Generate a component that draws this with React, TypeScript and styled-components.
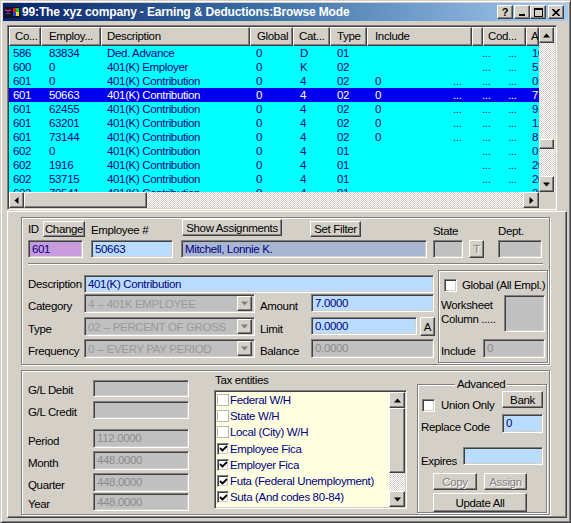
import React from "react";
import styled, { createGlobalStyle, css } from "styled-components";

const FACE = "#d4d0c8";
const SHADOW = "#808080";
const DARK = "#404040";
const NAVY = "#000080";
const BLUE_FIELD = "#badcff";
const GREY_FIELD = "#c0c0c0";
const MUTED = "#8c8c8c";

const GlobalStyle = createGlobalStyle`
  html, body { margin: 0; padding: 0; background: ${FACE}; }
  body {
    font-family: "Liberation Sans", Arial, sans-serif;
    font-size: 11.5px;
    letter-spacing: -0.35px;
    color: #000;
  }
  * { box-sizing: border-box; }
`;

const raised = css`
  border: 1px solid;
  border-color: #fff ${DARK} ${DARK} #fff;
  box-shadow: inset -1px -1px ${SHADOW};
  background: ${FACE};
`;

const sunken = css`
  border: 1px solid;
  border-color: ${SHADOW} #fff #fff ${SHADOW};
  box-shadow: inset 1px 1px ${DARK}, inset -1px -1px ${FACE};
`;

const etched = css`
  border: 1px solid ${SHADOW};
  box-shadow: inset 1px 1px #fff, 1px 1px #fff;
`;

const dither = css`
  background-color: ${FACE};
  background-image: conic-gradient(#fff 25%, transparent 0 50%, #fff 0 75%, transparent 0);
  background-size: 2px 2px;
`;

type Place = { $ml?: number; $mt?: number };
const place = css<Place>`
  margin-left: ${(p) => p.$ml ?? 0}px;
  margin-top: ${(p) => p.$mt ?? 0}px;
`;

/* ---------- window chrome ---------- */

const Window = styled.div`
  width: 571px;
  height: 523px;
  background: ${FACE};
  border: 1px solid;
  border-color: ${FACE} ${DARK} ${DARK} ${FACE};
  box-shadow: inset 1px 1px #fff, inset -1px -1px ${SHADOW};
  padding: 2px;
  display: flex;
  flex-direction: column;
  overflow: hidden;
`;

const TitleBar = styled.div`
  flex: none;
  height: 18px;
  display: flex;
  align-items: center;
  padding: 0 4px 0 1px;
  background: linear-gradient(90deg, #0a246a 0%, #3a6ea5 45%, #a6caf0 100%);
  color: #fff;
`;

const TitleText = styled.span`
  flex: 1;
  margin-left: 2px;
  font-weight: bold;
  font-size: 12px;
  letter-spacing: -0.15px;
  white-space: nowrap;
`;

const CaptionBtn = styled.div<Place>`
  ${raised};
  ${place};
  flex: none;
  width: 16px;
  height: 14px;
  display: flex;
  align-items: center;
  justify-content: center;
  color: #000;
  font-weight: bold;
  font-size: 11px;
  letter-spacing: 0;
`;

/* ---------- browse grid ---------- */

const headCols = "32px 60px 149px 43px 37px 37px 105px 11px 43px 13px";
const rowCols = "32px 60px 149px 43px 37px 37px 81px 30px 25px 23px 13px";

const GridFrame = styled.div`
  ${sunken};
  flex: none;
  margin: 4px 0 0 4px;
  width: 550px;
  height: 185px;
  padding: 1px;
  display: grid;
  grid-template-columns: 530px 16px;
  grid-template-rows: 165px 16px;
  background: ${FACE};
`;

const Table = styled.div`
  background: #00ffff;
  overflow: hidden;
  display: flex;
  flex-direction: column;
`;

const HeadRow = styled.div`
  flex: none;
  height: 19px;
  display: grid;
  grid-template-columns: ${headCols};
`;

const HeadCell = styled.div<{ $pad: number }>`
  ${raised};
  padding-left: ${(p) => p.$pad}px;
  line-height: 16px;
  white-space: nowrap;
  overflow: hidden;
`;

const DataRow = styled.div<{ $sel?: boolean }>`
  flex: none;
  height: 14px;
  line-height: 14px;
  display: grid;
  grid-template-columns: ${rowCols};
  background: ${(p) => (p.$sel ? "#0000ee" : "#00ffff")};
  color: ${(p) => (p.$sel ? "#fff" : NAVY)};
`;

const Cell = styled.div<{ $pad: number }>`
  padding-left: ${(p) => p.$pad}px;
  white-space: nowrap;
  overflow: hidden;
`;

const VScroll = styled.div`
  ${dither};
  display: flex;
  flex-direction: column;
`;

const HScroll = styled.div`
  ${dither};
  display: flex;
`;

const ScrollBtn = styled.div<{ $w?: number; $h?: number }>`
  ${raised};
  flex: none;
  width: ${(p) => p.$w ?? 16}px;
  height: ${(p) => p.$h ?? 16}px;
  display: flex;
  align-items: center;
  justify-content: center;
`;

const Thumb = styled.div<{ $w?: number; $h?: number; $mt?: number }>`
  ${raised};
  flex: none;
  width: ${(p) => (p.$w ? `${p.$w}px` : "auto")};
  height: ${(p) => (p.$h ? `${p.$h}px` : "auto")};
  margin-top: ${(p) => p.$mt ?? 0}px;
`;

const Spacer = styled.div`
  flex: 1;
`;

const Corner = styled.div`
  background: ${FACE};
`;

/* ---------- lower form ---------- */

const LowerPanel = styled.div`
  flex: none;
  margin: 1px 0 0 4px;
  width: 560px;
  height: 307px;
  border: 1px solid;
  border-color: #fff ${DARK} ${DARK} #fff;
  box-shadow: inset -1px -1px ${SHADOW};
  display: flex;
  flex-direction: column;
`;

const Group = styled.div<{ $h: number }>`
  ${etched};
  flex: none;
  margin: 5px 0 0 13px;
  width: 529px;
  height: ${(p) => p.$h}px;
  display: flex;
  flex-direction: column;
`;

const Row = styled.div<Place & { $h: number }>`
  ${place};
  flex: none;
  height: ${(p) => p.$h}px;
  display: flex;
  align-items: flex-start;
`;

const Label = styled.span<Place & { $w?: number; $lh?: number; $end?: boolean }>`
  ${place};
  flex: none;
  width: ${(p) => (p.$w ? `${p.$w}px` : "auto")};
  line-height: ${(p) => p.$lh ?? 14}px;
  white-space: nowrap;
  align-self: ${(p) => (p.$end ? "flex-end" : "flex-start")};
`;

const Field = styled.div<Place & { $w: number; $h?: number; $bg?: string; $muted?: boolean }>`
  ${sunken};
  ${place};
  flex: none;
  width: ${(p) => p.$w}px;
  height: ${(p) => p.$h ?? 18}px;
  background: ${(p) => p.$bg ?? GREY_FIELD};
  color: ${(p) => (p.$muted ? MUTED : NAVY)};
  padding: 0 3px;
  line-height: ${(p) => (p.$h ?? 18) - 2}px;
  white-space: nowrap;
  overflow: hidden;
`;

const Button = styled.button<Place & { $w: number; $h: number }>`
  ${raised};
  ${place};
  flex: none;
  width: ${(p) => p.$w}px;
  height: ${(p) => p.$h}px;
  padding: 0;
  font: inherit;
  letter-spacing: inherit;
  color: #000;
  line-height: ${(p) => p.$h - 3}px;
  &:disabled {
    color: ${SHADOW};
    text-shadow: 1px 1px #fff;
  }
`;

const Separator = styled.div`
  flex: none;
  margin: 5px 0 0 6px;
  width: 515px;
  height: 2px;
  border-top: 1px solid ${SHADOW};
  border-bottom: 1px solid #fff;
`;

const FormBody = styled.div`
  flex: 1;
  display: flex;
  align-items: flex-start;
`;

const Column = styled.div<Place & { $w: number }>`
  ${place};
  flex: none;
  width: ${(p) => p.$w}px;
  display: flex;
  flex-direction: column;
`;

const Combo = styled.div<{ $w: number }>`
  ${sunken};
  flex: none;
  width: ${(p) => p.$w}px;
  height: 19px;
  padding: 2px;
  background: ${GREY_FIELD};
  color: #999;
  display: flex;
  align-items: center;
`;

const ComboText = styled.span`
  flex: 1;
  padding-left: 1px;
  white-space: nowrap;
  overflow: hidden;
`;

const ComboBtn = styled.div`
  ${raised};
  flex: none;
  width: 15px;
  height: 15px;
  display: flex;
  align-items: center;
  justify-content: center;
`;

const Box = styled.div<Place & { $w: number; $h: number }>`
  ${etched};
  ${place};
  flex: none;
  position: relative;
  width: ${(p) => p.$w}px;
  height: ${(p) => p.$h}px;
  display: flex;
  flex-direction: column;
`;

const Legend = styled.span`
  position: absolute;
  top: -8px;
  left: 37px;
  padding: 0 2px;
  line-height: 14px;
  background: ${FACE};
`;

const Check = styled.div<Place & { $size?: number; $flat?: boolean }>`
  ${place};
  flex: none;
  width: ${(p) => p.$size ?? 13}px;
  height: ${(p) => p.$size ?? 13}px;
  background: #fff;
  display: flex;
  align-items: center;
  justify-content: center;
  ${(p) =>
    p.$flat
      ? css`
          border: 1px solid #b4b4b4;
        `
      : sunken};
`;

const Lines = styled.div<Place & { $w: number }>`
  ${place};
  flex: none;
  width: ${(p) => p.$w}px;
  padding-top: 3px;
  line-height: 14px;
`;

const ListBox = styled.div`
  ${sunken};
  flex: none;
  margin-top: 3px;
  height: 119px;
  padding: 1px;
  background: #ffffe1;
  display: flex;
`;

const ListItems = styled.div`
  flex: 1;
  display: flex;
  flex-direction: column;
`;

const ListItem = styled.div`
  flex: none;
  height: 16.2px;
  display: flex;
  align-items: center;
  color: ${NAVY};
  white-space: nowrap;
`;

const ItemText = styled.span`
  margin-left: 1px;
  line-height: 14px;
`;

const ListScroll = styled.div`
  ${dither};
  flex: none;
  width: 16px;
  display: flex;
  flex-direction: column;
`;

/* ---------- glyphs ---------- */

function Arrow({ dir, color = "#000" }: { dir: "up" | "down" | "left" | "right"; color?: string }) {
  const rot = { up: 0, right: 90, down: 180, left: 270 }[dir];
  return (
    <svg width="7" height="7" viewBox="0 0 7 7" style={{ transform: `rotate(${rot}deg)` }}>
      <polygon points="3.5,1.5 7,5.5 0,5.5" fill={color} />
    </svg>
  );
}

function Tick() {
  return (
    <svg width="9" height="9" viewBox="0 0 9 9">
      <path d="M1 4 L3.5 6.5 L8 2" fill="none" stroke="#000" strokeWidth="1.8" />
    </svg>
  );
}

function AppIcon() {
  return (
    <svg width="16" height="16" viewBox="0 0 16 16">
      <rect x="0" y="3" width="16" height="11" fill="#101028" />
      <rect x="1" y="5" width="2" height="2" fill="#c02050" />
      <rect x="3" y="6" width="2" height="2" fill="#8040b0" />
      <rect x="5" y="5" width="2" height="2" fill="#c02050" />
      <rect x="2" y="9" width="4" height="1" fill="#6040a0" />
      <rect x="9" y="4" width="3" height="4" fill="#e02020" />
      <rect x="12" y="4" width="3" height="4" fill="#20c030" />
      <rect x="9" y="8" width="3" height="4" fill="#2040e0" />
      <rect x="12" y="8" width="3" height="4" fill="#f0d820" />
    </svg>
  );
}

/* ---------- data ---------- */

type GridRow = {
  co: string;
  emp: string;
  desc: string;
  cat: string;
  type: string;
  inc: string;
  all: boolean;
  a: string;
  sel?: boolean;
};

const gridRows: GridRow[] = [
  { co: "586", emp: "83834", desc: "Ded. Advance", cat: "D", type: "01", inc: "", all: false, a: "10.0000" },
  { co: "600", emp: "0", desc: "401(K) Employer", cat: "K", type: "02", inc: "", all: false, a: "5.0000" },
  { co: "601", emp: "0", desc: "401(K) Contribution", cat: "4", type: "02", inc: "0", all: true, a: "0.0000" },
  { co: "601", emp: "50663", desc: "401(K) Contribution", cat: "4", type: "02", inc: "0", all: true, a: "7.0000", sel: true },
  { co: "601", emp: "62455", desc: "401(K) Contribution", cat: "4", type: "02", inc: "0", all: true, a: "9.0000" },
  { co: "601", emp: "63201", desc: "401(K) Contribution", cat: "4", type: "02", inc: "0", all: true, a: "12.0000" },
  { co: "601", emp: "73144", desc: "401(K) Contribution", cat: "4", type: "02", inc: "0", all: true, a: "8.0000" },
  { co: "602", emp: "0", desc: "401(K) Contribution", cat: "4", type: "01", inc: "", all: false, a: "0.0000" },
  { co: "602", emp: "1916", desc: "401(K) Contribution", cat: "4", type: "01", inc: "", all: false, a: "20.0000" },
  { co: "602", emp: "53715", desc: "401(K) Contribution", cat: "4", type: "01", inc: "", all: false, a: "20.0000" },
  { co: "602", emp: "79541", desc: "401(K) Contribution", cat: "4", type: "01", inc: "", all: false, a: "20.0000" },
];

const headers: [string, number][] = [
  ["Co...", 5],
  ["Employ...", 7],
  ["Description", 5],
  ["Global", 6],
  ["Cat...", 5],
  ["Type", 6],
  ["Include", 7],
  ["", 0],
  ["Cod...", 4],
  ["A", 4],
];

const pads = [4, 8, 6, 6, 7, 7, 8, 5, 4, 5, 6];

const taxes: [string, boolean][] = [
  ["Federal W/H", false],
  ["State W/H", false],
  ["Local (City) W/H", false],
  ["Employee Fica", true],
  ["Employer Fica", true],
  ["Futa (Federal Unemployment)", true],
  ["Suta (And codes 80-84)", true],
];

function Browse() {
  return (
    <GridFrame>
      <Table>
        <HeadRow>
          {headers.map(([t, p], i) => (
            <HeadCell key={i} $pad={p}>
              {t}
            </HeadCell>
          ))}
        </HeadRow>
        {gridRows.map((r, i) => {
          const cells = [r.co, r.emp, r.desc, "0", r.cat, r.type, r.inc, r.all ? "..." : "", "...", "...", r.a];
          return (
            <DataRow key={i} $sel={r.sel}>
              {cells.map((c, j) => (
                <Cell key={j} $pad={pads[j]}>
                  {c}
                </Cell>
              ))}
            </DataRow>
          );
        })}
      </Table>
      <VScroll>
        <ScrollBtn $w={15}>
          <Arrow dir="up" />
        </ScrollBtn>
        <Thumb $w={15} $h={10} $mt={96} />
        <Spacer />
        <ScrollBtn $w={15}>
          <Arrow dir="down" />
        </ScrollBtn>
      </VScroll>
      <HScroll>
        <ScrollBtn $w={15}>
          <Arrow dir="left" />
        </ScrollBtn>
        <Thumb $w={123} />
        <Spacer />
        <ScrollBtn>
          <Arrow dir="right" />
        </ScrollBtn>
      </HScroll>
      <Corner />
    </GridFrame>
  );
}

function ComboBox({ w, text }: { w: number; text: string }) {
  return (
    <Combo $w={w}>
      <ComboText>{text}</ComboText>
      <ComboBtn>
        <Arrow dir="down" color={SHADOW} />
      </ComboBtn>
    </Combo>
  );
}

function DeductionGroup() {
  return (
    <Group $h={148}>
      <Row $mt={1} $h={20}>
        <Label $ml={6} $mt={3} $w={15}>
          ID
        </Label>
        <Button $mt={2} $w={42} $h={16}>
          Change
        </Button>
        <Label $ml={6} $mt={4} $w={91}>
          Employee #
        </Label>
        <Button $w={100} $h={17}>
          Show Assignments
        </Button>
        <Button $ml={28} $mt={2} $w={51} $h={16}>
          Set Filter
        </Button>
        <Label $ml={72} $mt={5} $w={65}>
          State
        </Label>
        <Label $mt={5}>Dept.</Label>
      </Row>
      <Row $mt={1} $h={18}>
        <Field $ml={6} $w={55} $bg="#c89bdc">
          601
        </Field>
        <Field $ml={8} $w={82} $bg={BLUE_FIELD}>
          50663
        </Field>
        <Field $ml={8} $w={246} $bg="#a8b6d2">
          Mitchell, Lonnie K.
        </Field>
        <Field $ml={6} $w={30} />
        <Button $ml={6} $w={15} $h={18} disabled>
          T
        </Button>
        <Field $ml={14} $w={44} />
      </Row>
      <Separator />
      <FormBody>
        <Column $ml={6} $w={406}>
          <Row $mt={10} $h={18}>
            <Label $w={56} $lh={18}>
              Description
            </Label>
            <Field $w={350} $bg={BLUE_FIELD}>
              401(K) Contribution
            </Field>
          </Row>
          <Row $mt={1} $h={19}>
            <Label $w={56} $end>
              Category
            </Label>
            <ComboBox w={171} text="4 -- 401K EMPLOYEE" />
            <Label $ml={5} $w={51} $end>
              Amount
            </Label>
            <Field $w={123} $bg={BLUE_FIELD}>
              7.0000
            </Field>
          </Row>
          <Row $mt={4} $h={19}>
            <Label $w={56} $end>
              Type
            </Label>
            <ComboBox w={171} text="02 -- PERCENT OF GROSS" />
            <Label $ml={5} $w={51} $end>
              Limit
            </Label>
            <Field $w={106} $bg={BLUE_FIELD}>
              0.0000
            </Field>
            <Button $ml={3} $w={15} $h={19}>
              A
            </Button>
          </Row>
          <Row $mt={3} $h={19}>
            <Label $w={56} $end>
              Frequency
            </Label>
            <ComboBox w={171} text="0 -- EVERY PAY PERIOD" />
            <Label $ml={5} $w={51} $end>
              Balance
            </Label>
            <Field $w={123} $h={19} $muted>
              0.0000
            </Field>
          </Row>
        </Column>
        <Box $ml={4} $mt={5} $w={110} $h={93}>
          <Row $mt={8} $h={13}>
            <Check $ml={5} />
            <Label $ml={5} $lh={13}>
              Global (All Empl.)
            </Label>
          </Row>
          <Row $mt={3} $h={37}>
            <Lines $ml={2} $w={63}>
              Worksheet
              <br />
              Column .....
            </Lines>
            <Field $w={41} $h={37} />
          </Row>
          <Row $mt={7} $h={19}>
            <Label $ml={2} $w={42} $end>
              Include
            </Label>
            <Field $w={62} $h={19} $muted>
              0
            </Field>
          </Row>
        </Box>
      </FormBody>
    </Group>
  );
}

function TotalsGroup() {
  const totals: [string, string, number, number][] = [
    ["G/L Debit", "", 9, 17],
    ["G/L Credit", "", 4, 18],
    ["Period", "112.0000", 10, 19],
    ["Month", "448.0000", 3, 19],
    ["Quarter", "448.0000", 3, 19],
    ["Year", "448.0000", 1, 18],
  ];
  return (
    <Group $h={145}>
      <FormBody>
        <Column $ml={6} $w={161}>
          {totals.map(([label, value, mt, h]) => (
            <Row key={label} $mt={mt} $h={h}>
              <Label $w={65} $end>
                {label}
              </Label>
              <Field $w={96} $h={h} $muted>
                {value}
              </Field>
            </Row>
          ))}
        </Column>
        <Column $ml={25} $w={193}>
          <Label $mt={2} $ml={1}>
            Tax entities
          </Label>
          <ListBox>
            <ListItems>
              {taxes.map(([name, on]) => (
                <ListItem key={name}>
                  <Check $ml={1} $size={12} $flat={!on}>
                    {on && <Tick />}
                  </Check>
                  <ItemText>{name}</ItemText>
                </ListItem>
              ))}
            </ListItems>
            <ListScroll>
              <ScrollBtn>
                <Arrow dir="up" />
              </ScrollBtn>
              <Thumb $h={65} />
              <Spacer />
              <ScrollBtn>
                <Arrow dir="down" />
              </ScrollBtn>
            </ListScroll>
          </ListBox>
        </Column>
        <Box $ml={10} $mt={13} $w={130} $h={129}>
          <Legend>Advanced</Legend>
          <Row $mt={6} $h={20}>
            <Check $ml={4} $mt={8} />
            <Label $ml={6} $mt={7} $w={61}>
              Union Only
            </Label>
            <Button $w={41} $h={17}>
              Bank
            </Button>
          </Row>
          <Row $mt={3} $h={19}>
            <Label $ml={3} $mt={6} $w={81}>
              Replace Code
            </Label>
            <Field $w={41} $h={19} $bg={BLUE_FIELD}>
              0
            </Field>
          </Row>
          <Row $mt={14} $h={18}>
            <Label $ml={3} $mt={7} $w={42}>
              Expires
            </Label>
            <Field $w={80} $bg={BLUE_FIELD} />
          </Row>
          <Row $mt={8} $h={17}>
            <Button $ml={15} $w={44} $h={17} disabled>
              Copy
            </Button>
            <Button $ml={7} $w={43} $h={17} disabled>
              Assign
            </Button>
          </Row>
          <Row $mt={3} $h={19}>
            <Button $ml={15} $w={94} $h={19}>
              Update All
            </Button>
          </Row>
        </Box>
      </FormBody>
    </Group>
  );
}

export default function App() {
  return (
    <>
      <GlobalStyle />
      <Window>
        <TitleBar>
          <AppIcon />
          <TitleText>99:The xyz company - Earning &amp; Deductions:Browse Mode</TitleText>
          <CaptionBtn>?</CaptionBtn>
          <CaptionBtn $ml={1}>
            <svg width="8" height="8" viewBox="0 0 8 8">
              <rect x="1" y="6" width="6" height="2" fill="#000" />
            </svg>
          </CaptionBtn>
          <CaptionBtn>
            <svg width="9" height="9" viewBox="0 0 9 9">
              <rect x="0.5" y="0.5" width="8" height="8" fill="none" stroke="#000" />
              <rect x="0" y="0" width="9" height="2" fill="#000" />
            </svg>
          </CaptionBtn>
          <CaptionBtn $ml={2}>
            <svg width="8" height="7" viewBox="0 0 8 7">
              <path d="M0.5 0 L7.5 7 M7.5 0 L0.5 7" stroke="#000" strokeWidth="1.6" />
            </svg>
          </CaptionBtn>
        </TitleBar>
        <Browse />
        <LowerPanel>
          <DeductionGroup />
          <TotalsGroup />
        </LowerPanel>
      </Window>
    </>
  );
}
